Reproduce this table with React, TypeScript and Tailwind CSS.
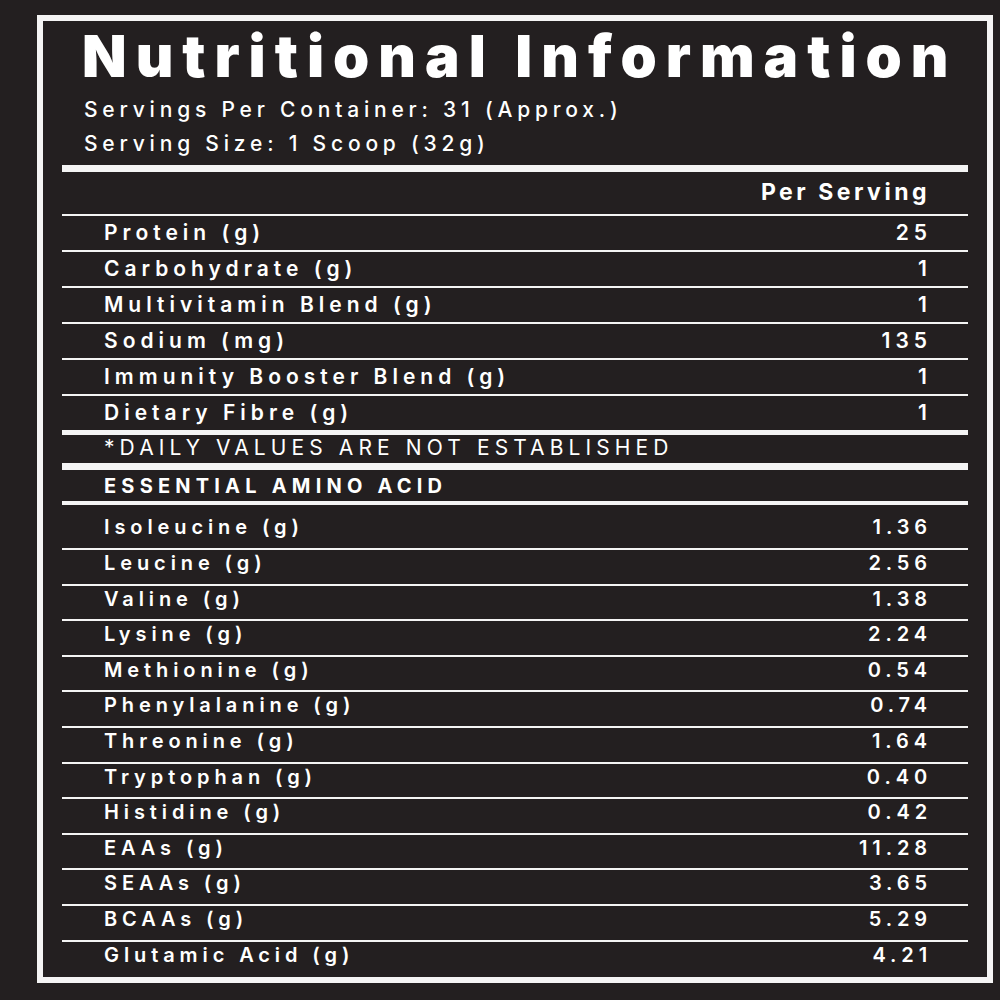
const topRows = [
  { label: "Protein (g)", value: "25" },
  { label: "Carbohydrate (g)", value: "1" },
  { label: "Multivitamin Blend (g)", value: "1" },
  { label: "Sodium (mg)", value: "135" },
  { label: "Immunity Booster Blend (g)", value: "1" },
  { label: "Dietary Fibre (g)", value: "1" },
];

const aminoRows = [
  { label: "Isoleucine (g)", value: "1.36" },
  { label: "Leucine (g)", value: "2.56" },
  { label: "Valine (g)", value: "1.38" },
  { label: "Lysine (g)", value: "2.24" },
  { label: "Methionine (g)", value: "0.54" },
  { label: "Phenylalanine (g)", value: "0.74" },
  { label: "Threonine (g)", value: "1.64" },
  { label: "Tryptophan (g)", value: "0.40" },
  { label: "Histidine (g)", value: "0.42" },
  { label: "EAAs (g)", value: "11.28" },
  { label: "SEAAs (g)", value: "3.65" },
  { label: "BCAAs (g)", value: "5.29" },
  { label: "Glutamic Acid (g)", value: "4.21" },
];

export default function App() {
  return (
    <div className="w-[1000px] h-[1000px] bg-[#231f20] pt-[15px] pl-[37px] text-white font-['Inter',sans-serif]">
      <div className="w-[956px] h-[968px] border-[6px] border-[#f4f4f4] flex flex-col">
        {/* heading */}
        <h1 className="pl-[39px] mt-[6px] text-[58px] leading-[58px] font-black tracking-[9px]">
          Nutritional Information
        </h1>
        <div className="pl-[41px] mt-[8px] text-[21px] leading-[34px] font-medium tracking-[4.8px]">
          <p>Servings Per Container: 31 (Approx.)</p>
          <p>Serving Size: 1 Scoop (32g)</p>
        </div>

        <div className="mx-[19px] mt-[4px] h-[7px] bg-[#f4f4f4]" />

        {/* per serving table */}
        <div className="mx-[19px] flex flex-col">
          <div className="h-[44px] border-b-2 border-[#f4f4f4] pt-[7px] pr-[38px] text-right text-[23px] leading-[26px] font-bold tracking-[3.5px]">
            Per Serving
          </div>
          {topRows.map((row, i) => (
            <div
              key={row.label}
              className={
                i === topRows.length - 1
                  ? "h-[39px] border-b-[5px] border-[#f4f4f4] pt-[4px] pl-[42px] pr-[36px] flex justify-between text-[21px] leading-[26px] font-semibold tracking-[5px]"
                  : "h-[36px] border-b-2 border-[#f4f4f4] pt-[4px] pl-[42px] pr-[36px] flex justify-between text-[21px] leading-[26px] font-semibold tracking-[5px]"
              }
            >
              <span>{row.label}</span>
              <span>{row.value}</span>
            </div>
          ))}
          <div className="h-[35px] border-b-[7px] border-[#f4f4f4] pl-[42px] pt-[1px] text-[21px] leading-[24px] font-normal tracking-[5.1px]">
            *DAILY VALUES ARE NOT ESTABLISHED
          </div>
          <div className="h-[35px] border-b-4 border-[#f4f4f4] pl-[42px] pt-[4px] text-[20px] leading-[24px] font-bold tracking-[5.2px]">
            ESSENTIAL AMINO ACID
          </div>

          {/* amino acids */}
          {aminoRows.map((row, i) => (
            <div
              key={row.label}
              className={
                i === 0
                  ? "h-[45px] border-b-2 border-[#f4f4f4] pt-[9px] pl-[42px] pr-[36px] flex justify-between text-[20px] leading-[27px] font-semibold tracking-[4.9px]"
                  : i === aminoRows.length - 1
                    ? "h-[33px] pl-[42px] pr-[36px] flex justify-between text-[20px] leading-[27px] font-semibold tracking-[4.9px]"
                    : "h-[35.6px] border-b-2 border-[#f4f4f4] pl-[42px] pr-[36px] flex justify-between text-[20px] leading-[27px] font-semibold tracking-[4.9px]"
              }
            >
              <span>{row.label}</span>
              <span>{row.value}</span>
            </div>
          ))}
        </div>
      </div>
    </div>
  );
}
